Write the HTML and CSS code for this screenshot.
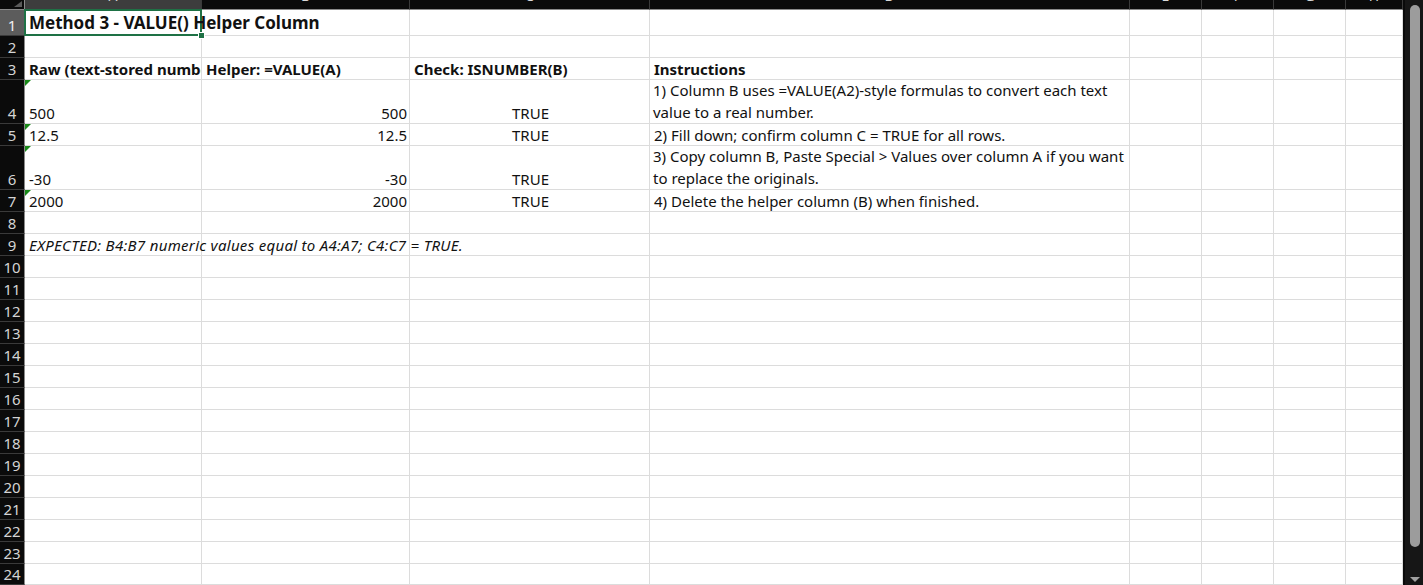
FILE: index.html
```html
<!DOCTYPE html>
<html>
<head>
<meta charset="utf-8">
<link rel="stylesheet" href="styles.css">
</head>
<body>
<div class="app">
  <div class="sheet">
    <div class="corner"><span class="tri"></span></div>
    <div class="ch sel"><span>A</span></div>
    <div class="ch"><span>B</span></div>
    <div class="ch"><span>C</span></div>
    <div class="ch"><span>D</span></div>
    <div class="ch"><span>E</span></div>
    <div class="ch"><span>F</span></div>
    <div class="ch"><span>G</span></div>
    <div class="ch"><span>H</span></div>

    <div class="rh sel">1</div>
    <div class="c title active">Method 3 - VALUE() Helper Column<span class="handle"></span></div>
    <div class="c"></div><div class="c"></div><div class="c"></div><div class="c"></div><div class="c"></div><div class="c"></div><div class="c"></div>

    <div class="rh">2</div>
    <div class="c"></div><div class="c"></div><div class="c"></div><div class="c"></div><div class="c"></div><div class="c"></div><div class="c"></div><div class="c"></div>

    <div class="rh">3</div>
    <div class="c b clip">Raw (text-stored numbers)</div>
    <div class="c b clip">Helper: =VALUE(A)</div>
    <div class="c b">Check: ISNUMBER(B)</div>
    <div class="c b">Instructions</div>
    <div class="c"></div><div class="c"></div><div class="c"></div><div class="c"></div>

    <div class="rh">4</div>
    <div class="c flag">500</div>
    <div class="c r">500</div>
    <div class="c m">TRUE</div>
    <div class="c wrap">1) Column B uses =VALUE(A2)-style formulas to convert each text value to a real number.</div>
    <div class="c"></div><div class="c"></div><div class="c"></div><div class="c"></div>

    <div class="rh">5</div>
    <div class="c flag">12.5</div>
    <div class="c r">12.5</div>
    <div class="c m">TRUE</div>
    <div class="c">2) Fill down; confirm column C = TRUE for all rows.</div>
    <div class="c"></div><div class="c"></div><div class="c"></div><div class="c"></div>

    <div class="rh">6</div>
    <div class="c flag">-30</div>
    <div class="c r">-30</div>
    <div class="c m">TRUE</div>
    <div class="c wrap">3) Copy column B, Paste Special &gt; Values over column A if you want to replace the originals.</div>
    <div class="c"></div><div class="c"></div><div class="c"></div><div class="c"></div>

    <div class="rh">7</div>
    <div class="c flag">2000</div>
    <div class="c r">2000</div>
    <div class="c m">TRUE</div>
    <div class="c">4) Delete the helper column (B) when finished.</div>
    <div class="c"></div><div class="c"></div><div class="c"></div><div class="c"></div>

    <div class="rh">8</div>
    <div class="c"></div><div class="c"></div><div class="c"></div><div class="c"></div><div class="c"></div><div class="c"></div><div class="c"></div><div class="c"></div>

    <div class="rh">9</div>
    <div class="c i over">EXPECTED: B4:B7 numeric values equal to A4:A7; C4:C7 = TRUE.</div>
    <div class="c"></div><div class="c"></div><div class="c"></div><div class="c"></div><div class="c"></div><div class="c"></div><div class="c"></div>

    <div class="rh">10</div><div class="c"></div><div class="c"></div><div class="c"></div><div class="c"></div><div class="c"></div><div class="c"></div><div class="c"></div><div class="c"></div>
    <div class="rh">11</div><div class="c"></div><div class="c"></div><div class="c"></div><div class="c"></div><div class="c"></div><div class="c"></div><div class="c"></div><div class="c"></div>
    <div class="rh">12</div><div class="c"></div><div class="c"></div><div class="c"></div><div class="c"></div><div class="c"></div><div class="c"></div><div class="c"></div><div class="c"></div>
    <div class="rh">13</div><div class="c"></div><div class="c"></div><div class="c"></div><div class="c"></div><div class="c"></div><div class="c"></div><div class="c"></div><div class="c"></div>
    <div class="rh">14</div><div class="c"></div><div class="c"></div><div class="c"></div><div class="c"></div><div class="c"></div><div class="c"></div><div class="c"></div><div class="c"></div>
    <div class="rh">15</div><div class="c"></div><div class="c"></div><div class="c"></div><div class="c"></div><div class="c"></div><div class="c"></div><div class="c"></div><div class="c"></div>
    <div class="rh">16</div><div class="c"></div><div class="c"></div><div class="c"></div><div class="c"></div><div class="c"></div><div class="c"></div><div class="c"></div><div class="c"></div>
    <div class="rh">17</div><div class="c"></div><div class="c"></div><div class="c"></div><div class="c"></div><div class="c"></div><div class="c"></div><div class="c"></div><div class="c"></div>
    <div class="rh">18</div><div class="c"></div><div class="c"></div><div class="c"></div><div class="c"></div><div class="c"></div><div class="c"></div><div class="c"></div><div class="c"></div>
    <div class="rh">19</div><div class="c"></div><div class="c"></div><div class="c"></div><div class="c"></div><div class="c"></div><div class="c"></div><div class="c"></div><div class="c"></div>
    <div class="rh">20</div><div class="c"></div><div class="c"></div><div class="c"></div><div class="c"></div><div class="c"></div><div class="c"></div><div class="c"></div><div class="c"></div>
    <div class="rh">21</div><div class="c"></div><div class="c"></div><div class="c"></div><div class="c"></div><div class="c"></div><div class="c"></div><div class="c"></div><div class="c"></div>
    <div class="rh">22</div><div class="c"></div><div class="c"></div><div class="c"></div><div class="c"></div><div class="c"></div><div class="c"></div><div class="c"></div><div class="c"></div>
    <div class="rh">23</div><div class="c"></div><div class="c"></div><div class="c"></div><div class="c"></div><div class="c"></div><div class="c"></div><div class="c"></div><div class="c"></div>
    <div class="rh">24</div><div class="c"></div><div class="c"></div><div class="c"></div><div class="c"></div><div class="c"></div><div class="c"></div><div class="c"></div><div class="c"></div>
  </div>
  <div class="vscroll">
    <div class="thumb"></div>
    <div class="arrow"></div>
  </div>
</div>
</body>
</html>
```

FILE: styles.css
```css
* { box-sizing: border-box; }
html, body { margin: 0; padding: 0; }
body {
  width: 1423px;
  height: 585px;
  overflow: hidden;
  background: #ffffff;
  font-family: "Noto Sans", "Noto Sans CJK KR", sans-serif;
  font-size: 15px;
  color: #111111;
}
.app {
  display: flex;
  width: 1423px;
  height: 585px;
  overflow: hidden;
}
.sheet {
  display: grid;
  grid-template-columns: 25px 177px 208px 240px 480px 72px 72px 72px 57px;
  grid-template-rows: 10px 26px 22px 22px 44px 22px 44px repeat(17, 22px);
  width: 1403px;
  flex: none;
  background: #ffffff;
}
.corner {
  background: #0b0b0b;
  border-right: 1px solid #8a8a8a;
  border-bottom: 1px solid #8a8a8a;
  position: relative;
  overflow: hidden;
}
.corner .tri {
  position: absolute;
  right: 2px;
  bottom: 2px;
  width: 0; height: 0;
  border-left: 8px solid transparent;
  border-bottom: 6px solid #5a5a5a;
}
.ch {
  background: #0b0b0b;
  border-right: 1px solid #3a3a3a;
  border-bottom: 1px solid #8a8a8a;
  overflow: hidden;
  color: #d8d8d8;
  text-align: center;
  font-size: 14px;
}
.ch span {
  display: block;
  line-height: 14px;
  margin-top: -11px;
}
.ch.sel { background: #3d3d3d; }
.rh {
  background: #0b0b0b;
  color: #d4d4d4;
  border-right: 1px solid #8a8a8a;
  border-bottom: 1px solid #3a3a3a;
  display: flex;
  align-items: flex-end;
  justify-content: center;
  font-size: 15px;
  line-height: 20px;
}
.rh.sel { background: #5c5c5c; color: #f0f0f0; }
.c {
  border-right: 1px solid #dcdcdc;
  border-bottom: 1px solid #dcdcdc;
  display: flex;
  align-items: flex-end;
  padding: 0 2px 0 4px;
  line-height: 20px;
  white-space: nowrap;
  position: relative;
  min-width: 0;
}
.c.title {
  font-size: 17px;
  font-weight: 700;
  overflow: visible;
  z-index: 2;
  padding-bottom: 1px;
}
.c.active {
  border: 2px solid #1e7145;
  margin: -1px 0 0 -1px;
  width: 178px;
  height: 27px;
  padding-left: 3px;
}
.handle {
  position: absolute;
  right: -5px;
  bottom: -5px;
  width: 7px;
  height: 7px;
  background: #1e7145;
  border: 1px solid #ffffff;
}
.c.b { font-weight: 700; }
.c.clip { overflow: hidden; }
.c.r { justify-content: flex-end; }
.c.m { justify-content: center; }
.c.wrap {
  white-space: normal;
  line-height: 22px;
  padding-right: 0;
  padding-left: 3px;
}
.c.i { font-style: italic; letter-spacing: 0.3px; }
.c.over { overflow: visible; z-index: 1; }
.c.flag::before {
  content: "";
  position: absolute;
  left: 0;
  top: 0;
  width: 0; height: 0;
  border-top: 6px solid #1a8a1a;
  border-right: 6px solid transparent;
}
.vscroll {
  flex: none;
  width: 20px;
  height: 585px;
  background: #161616;
  border-left: 2px solid #0a0a0a;
  position: relative;
}
.thumb {
  position: absolute;
  left: 5px;
  top: 5px;
  width: 10px;
  height: 542px;
  background: #9c9c9c;
  border-radius: 5px;
}
.arrow {
  position: absolute;
  left: 5px;
  bottom: 3px;
  width: 0; height: 0;
  border-left: 5px solid transparent;
  border-right: 5px solid transparent;
  border-top: 5px solid #a0a0a0;
}
```
